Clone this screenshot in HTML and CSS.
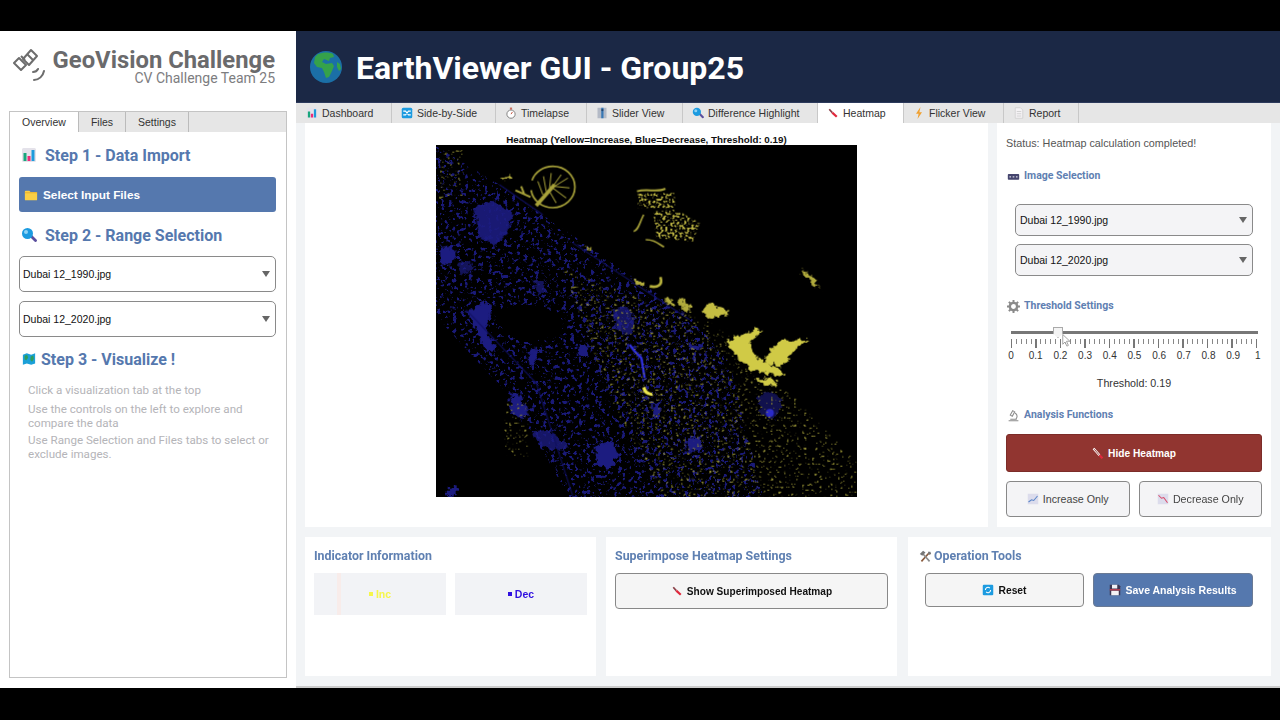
FILE: index.html
```html
<!DOCTYPE html>
<html lang="en">
<head>
    <meta charset="UTF-8">
    <title>EarthViewer GUI - Group25</title>
    <link rel="stylesheet" href="styles.css">
</head>
<body>
    <svg class="icon-defs" xmlns="http://www.w3.org/2000/svg">
        <symbol id="i-bars" viewBox="0 0 16 16">
            <rect x="1" y="1" width="14" height="14" rx="1.5" fill="#e4e2ea"/>
            <rect x="2.5" y="6" width="3" height="8" fill="#19a67c"/>
            <rect x="6.5" y="9" width="3" height="5" fill="#ef2a78"/>
            <rect x="10.5" y="3" width="3" height="11" fill="#1d9bdc"/>
        </symbol>
        <symbol id="i-folder" viewBox="0 0 16 16">
            <path d="M1 4a1 1 0 0 1 1-1h4l1.500 1.500H14a1 1 0 0 1 1 1V13a1 1 0 0 1-1 1H2a1 1 0 0 1-1-1z" fill="#fbcf45"/>
            <path d="M1 5h14v1H1z" fill="#e0a92c"/>
        </symbol>
        <symbol id="i-search" viewBox="0 0 16 16">
            <path d="M9 10l2-2 4.500 4.500a1.400 1.400 0 0 1-2 2z" fill="#5b4f9e"/>
            <circle cx="6.500" cy="6.500" r="5.500" fill="#1c9be0"/>
            <circle cx="5" cy="5" r="2" fill="#8fd3f5"/>
        </symbol>
        <symbol id="i-map" viewBox="0 0 16 16">
            <path d="M1 3l4.500-1.500L10.500 3 15 1.500V13l-4.500 1.500L5.500 13 1 14.500z" fill="#1ba0d8"/>
            <path d="M3 4l3-.5 1 3-2 3-2-1zM10 5l3-1 .5 4-2 3-2-2z" fill="#2f9e5b"/>
        </symbol>
        <symbol id="i-globe" viewBox="0 0 32 32">
            <circle cx="16" cy="16" r="16" fill="#1b6fa6"/>
            <path d="M9 3c4-2 10-2 14 0l1 3-4 1-1 3-5-2-2 3 4 2 6-1 2 3-2 5-3 6-3 1-2-6-2-4-5-1-3-4 1-6 3-3z" fill="#35a24a"/>
            <path d="M27 11l3 2 1 5-2 2-2-4z" fill="#35a24a"/>
        </symbol>
        <symbol id="i-swap" viewBox="0 0 16 16">
            <rect x="1" y="1" width="14" height="14" rx="2" fill="#1c9be0"/>
            <path d="M3 5.500h3l4 5h3M3 10.500h3l4-5h3" fill="none" stroke="#fff" stroke-width="1.400"/>
        </symbol>
        <symbol id="i-timer" viewBox="0 0 16 16">
            <circle cx="8" cy="9.500" r="5.500" fill="#fff" stroke="#777" stroke-width="1.200"/>
            <path d="M8 9.500l2-3M6.500 1.500h3M8 1.500V4" fill="none" stroke="#c0442f" stroke-width="1.200"/>
        </symbol>
        <symbol id="i-slider" viewBox="0 0 16 16">
            <rect x="2" y="1" width="12" height="14" fill="#b4bac6"/>
            <rect x="7" y="1" width="3" height="14" fill="#3878b4"/>
            <circle cx="8.500" cy="4" r="1.500" fill="#24466e"/>
        </symbol>
        <symbol id="i-line" viewBox="0 0 16 16">
            <path d="M3 3l4 4.500" stroke="#8a4048" stroke-width="2.200"/>
            <path d="M7 7.500l6 5.500" stroke="#e0283c" stroke-width="3"/>
        </symbol>
        <symbol id="i-line-light" viewBox="0 0 16 16">
            <path d="M2 2l8 9" stroke="#fff" stroke-width="3"/>
            <path d="M3 3l6.500 7.500" stroke="#913530" stroke-width="1.200"/>
            <path d="M10 11l4 4" stroke="#e0283c" stroke-width="3"/>
        </symbol>
        <symbol id="i-bolt" viewBox="0 0 16 16">
            <path d="M10 0L4 9h3.500L6 16l6-9H8.500z" fill="#f0a030"/>
        </symbol>
        <symbol id="i-doc" viewBox="0 0 16 16">
            <path d="M3 1h7l3 3v11H3z" fill="#f4f2f4" stroke="#ccc"/>
            <path d="M5 6h6M5 9h6M5 12h6" stroke="#c8c8c8"/>
        </symbol>
        <symbol id="i-keys" viewBox="0 0 16 16">
            <rect x="1" y="5" width="14" height="7" rx="1" fill="#45456e"/>
            <path d="M3 8.500h2M7 8.500h2M11 8.500h2" stroke="#d8d8e4" stroke-width="1.500"/>
        </symbol>
        <symbol id="i-gear" viewBox="0 0 16 16">
            <circle cx="8" cy="8" r="4.500" fill="none" stroke="#8a8a8a" stroke-width="3"/>
            <path d="M8 0v3M8 13v3M0 8h3M13 8h3M2.300 2.300l2 2M11.700 11.700l2 2M13.700 2.300l-2 2M4.300 11.700l-2 2" stroke="#8a8a8a" stroke-width="2.400"/>
        </symbol>
        <symbol id="i-scope" viewBox="0 0 16 16">
            <path d="M2 14.500h12M4 12.500h8M7 2l2.500 1.500-3 5.500L4 7.500zM10 5c3 2 3 5 1 7.500" fill="none" stroke="#8c8c8c" stroke-width="1.300"/>
        </symbol>
        <symbol id="i-up" viewBox="0 0 16 16">
            <rect x="1" y="1" width="14" height="14" fill="#dcdcec"/>
            <path d="M2 12l4-3 3 1 5-6" fill="none" stroke="#5a86c8" stroke-width="1.400"/>
        </symbol>
        <symbol id="i-down" viewBox="0 0 16 16">
            <rect x="1" y="1" width="14" height="14" fill="#dcdcec"/>
            <path d="M2 3l4 4 3-1 5 7" fill="none" stroke="#d84868" stroke-width="1.400"/>
        </symbol>
        <symbol id="i-tools" viewBox="0 0 16 16">
            <path d="M3 14L12 4" stroke="#8a5a3c" stroke-width="2"/>
            <path d="M13 14L5 5" stroke="#8c8c8c" stroke-width="2"/>
            <path d="M1 5l4-4 3 2-4 4zM11 2l3 0 1 3-3 1z" fill="#777"/>
        </symbol>
        <symbol id="i-reset" viewBox="0 0 16 16">
            <rect x="1" y="1" width="14" height="14" rx="1.500" fill="#1c9be0"/>
            <path d="M4.500 8a3.500 3.500 0 0 1 6-2.500M11.500 8a3.500 3.500 0 0 1-6 2.500" fill="none" stroke="#fff" stroke-width="1.400"/>
        </symbol>
        <symbol id="i-save" viewBox="0 0 16 16">
            <path d="M1 1h12l2 2v12H1z" fill="#3a3550"/>
            <rect x="4" y="1" width="7" height="5" fill="#f0f0f4"/>
            <rect x="3" y="9" width="10" height="6" fill="#f4f2f4"/>
            <rect x="1" y="7" width="14" height="1.500" fill="#d84050"/>
        </symbol>
    </svg>

    <div class="app">
        <aside class="sidebar">
            <div class="brand">
                <svg class="brand-logo" viewBox="0 0 32 34">
                    <g fill="none" stroke="#6d6d6d" stroke-width="2" stroke-linejoin="round">
                        <path d="M10 11l8-9 6 6-8 9z"/>
                        <path d="M1 15l5-5 7 7-5 5z"/>
                        <path d="M14 6l6 6M8 8l4 4"/>
                        <path d="M20 24c2 0 4-1 5-3M21 32c5 0 9-4 10-9" stroke-linecap="round"/>
                    </g>
                </svg>
                <div class="brand-text">
                    <div class="brand-title">GeoVision Challenge</div>
                    <div class="brand-sub">CV Challenge Team 25</div>
                </div>
            </div>

            <div class="side-panel">
                <div class="side-tabs">
                    <a class="side-tab side-tab-on">Overview</a>
                    <a class="side-tab">Files</a>
                    <a class="side-tab">Settings</a>
                </div>
                <div class="side-body">
                    <h2 class="step step-1"><svg class="step-icon"><use href="#i-bars"/></svg>Step 1 - Data Import</h2>
                    <button class="select-files"><svg class="btn-icon-lg"><use href="#i-folder"/></svg>Select Input Files</button>
                    <h2 class="step step-2"><svg class="step-icon"><use href="#i-search"/></svg>Step 2 - Range Selection</h2>
                    <div class="drop drop-side">Dubai 12_1990.jpg</div>
                    <div class="drop drop-side">Dubai 12_2020.jpg</div>
                    <h2 class="step step-3"><svg class="step-icon-sm"><use href="#i-map"/></svg>Step 3 - Visualize !</h2>
                    <div class="help">
                        <p>Click a visualization tab at the top</p>
                        <p>Use the controls on the left to explore and compare the data</p>
                        <p>Use Range Selection and Files tabs to select or exclude images.</p>
                    </div>
                </div>
            </div>
        </aside>

        <main class="main">
            <header class="top">
                <svg class="globe"><use href="#i-globe"/></svg>
                <h1>EarthViewer GUI - Group25</h1>
            </header>

            <nav class="tabs">
                <a class="tab"><svg><use href="#i-bars"/></svg>Dashboard</a>
                <a class="tab"><svg><use href="#i-swap"/></svg>Side-by-Side</a>
                <a class="tab"><svg><use href="#i-timer"/></svg>Timelapse</a>
                <a class="tab"><svg><use href="#i-slider"/></svg>Slider View</a>
                <a class="tab"><svg><use href="#i-search"/></svg>Difference Highlight</a>
                <a class="tab tab-on"><svg><use href="#i-line"/></svg>Heatmap</a>
                <a class="tab"><svg><use href="#i-bolt"/></svg>Flicker View</a>
                <a class="tab"><svg><use href="#i-doc"/></svg>Report</a>
            </nav>

            <div class="workspace">
                <div class="upper">
                    <section class="plot">
                        <div class="plot-title">Heatmap (Yellow=Increase, Blue=Decrease, Threshold: 0.19)</div>
                        <svg class="heatmap" viewBox="20 46 1261 1056" preserveAspectRatio="none">
                            <defs>
                                <filter id="speck-blue" x="0" y="0" width="100%" height="100%" color-interpolation-filters="sRGB">
                                    <feTurbulence type="fractalNoise" baseFrequency="0.085" numOctaves="3" seed="4" result="n"/>
                                    <feColorMatrix in="n" type="matrix" values="0 0 0 0 0 0 0 0 0 0 0 0 0 0 0 10 0 0 0 -5.700" result="m"/>
                                    <feComposite in="SourceGraphic" in2="m" operator="in"/>
                                </filter>
                                <filter id="speck-yellow" x="0" y="0" width="100%" height="100%" color-interpolation-filters="sRGB">
                                    <feTurbulence type="fractalNoise" baseFrequency="0.13" numOctaves="2" seed="11" result="n"/>
                                    <feColorMatrix in="n" type="matrix" values="0 0 0 0 0 0 0 0 0 0 0 0 0 0 0 14 0 0 0 -9.300" result="m"/>
                                    <feComposite in="SourceGraphic" in2="m" operator="in"/>
                                </filter>
                                <filter id="speck-isle" x="0" y="0" width="100%" height="100%" color-interpolation-filters="sRGB">
                                    <feTurbulence type="fractalNoise" baseFrequency="0.14" numOctaves="1" seed="7" result="n"/>
                                    <feColorMatrix in="n" type="matrix" values="0 0 0 0 0 0 0 0 0 0 0 0 0 0 0 14 0 0 0 -7.300" result="m"/>
                                    <feComposite in="SourceGraphic" in2="m" operator="in"/>
                                </filter>
                                <filter id="rough" x="-10%" y="-10%" width="120%" height="120%" color-interpolation-filters="sRGB">
                                    <feTurbulence type="fractalNoise" baseFrequency="0.07" numOctaves="2" seed="3" result="n"/>
                                    <feDisplacementMap in="SourceGraphic" in2="n" scale="26" xChannelSelector="R" yChannelSelector="G"/>
                                </filter>
                            </defs>
                            <rect x="20" y="46" width="1261" height="1056" fill="#000"/>

                            <!-- blue = decrease -->
                            <g filter="url(#speck-blue)" fill="#1a1a78">
                                <path d="M20 50L210 165 780 560 900 700 1000 1102H420L240 800 20 560z"/>
                            </g>
                            <path d="M190 540l100-20 110 30 0 70-100 20-80-30z" fill="#000" filter="url(#rough)"/>
                            <g filter="url(#rough)" fill="#1c1c80">
                                <path d="M135 235l60-25 55 45-15 50-40 45-45-25z" opacity=".9"/>
                                <path d="M30 355l35-5 18 25-25 30-28-5z"/>
                                <path d="M85 400l35-10 15 30-40 15z" opacity=".7"/>
                                <path d="M115 545l50-30 25 15-20 70 30 60-30 5-30-70z"/>
                                <path d="M305 445l35 10 10 30-30 5z" opacity=".7"/>
                                <path d="M545 540l50-10 25 40-20 50-40-20z" opacity=".75"/>
                                <path d="M240 800l25-10 35 60-25 20-30-20z"/>
                                <path d="M305 905l50-5 65 50-30 15-60-20z" opacity=".8"/>
                                <path d="M495 945l50-10 25 40-30 45-35-20z"/>
                                <path d="M295 670l25-20 5 45-25 10z"/>
                                <path d="M670 820l25-5-5 40-20 5z"/>
                                <path d="M770 930l40-10 10 40-50 5z"/>
                                <path d="M55 1075l30-5 0 25-30 7z"/>
                                <path d="M445 650l30 0 0 30-30 0z"/>
                                <path d="M780 640l35 5-5 20-30-5z"/>
                                <path d="M985 800l40-15 35 25-25 60-45-15z" opacity=".6"/>
                            </g>
                            <path d="M600 645l15 20 20 20 10 60" fill="none" stroke="#3030e0" stroke-width="7"/>
                            <path d="M210 165L340 255M110 540L320 760 430 1100M430 340L780 570" fill="none" stroke="#101060" stroke-width="3"/>
                            <circle cx="1020" cy="850" r="12" fill="#2a2ac8"/>

                            <!-- yellow = increase -->
                            <g filter="url(#speck-yellow)" fill="#8f8a32">
                                <path d="M400 420L900 600 1281 1000V1102H700L560 850z"/>
                                <path d="M30 60h70v150H30z"/>
                                <path d="M225 820h70v160h-70z"/>
                            </g>
                            <g filter="url(#speck-isle)" fill="#b8b040">
                                <path d="M625 190h110v45H625z"/>
                                <path d="M670 245l70-5 70 40-20 55-110-10z"/>
                            </g>
                            <g fill="none" stroke="#a8a23a">
                                <ellipse cx="370" cy="172" rx="66" ry="62" stroke-width="5" stroke-dasharray="190 30 180 12"/>
                                <path d="M320 228L375 165" stroke-width="11"/>
                                <path d="M340 195l-15-40M350 185l-8-45M360 175l5-45M370 170l25-35M375 170l40-25M375 170l45 5M370 175l40 30M360 185l20 35" stroke-width="3"/>
                                <path d="M258 182l45 20M275 170l10 25" stroke-width="6"/>
                                <path d="M622 185c30-10 60 5 85-8" stroke-width="6"/>
                                <path d="M648 330c25 0 35 10 55 22M612 305c15-5 15-20 30-50" stroke-width="5"/>
                                <path d="M660 470c25 5 40-5 32-28" stroke="#b8b23e" stroke-width="8"/>
                            </g>
                            <g filter="url(#rough)" fill="#b0aa3c">
                                <path d="M215 148l30-12 5 12-25 6z"/>
                                <path d="M1115 418l25 18 35 45-30-22-25-20z"/>
                                <path d="M830 525l22-3 15 15 32 5-5 14-60 8-12-15z" fill="#c4bd42"/>
                                <path d="M708 505l18 5 5 18-22-3zM745 508l20 5-5 20-15-10zM765 520l25 5-15 25-15-15z"/>
                                <path d="M620 450l25 8-8 12-20-8zM465 348l22 5-5 8z"/>
                            </g>
                            <g filter="url(#rough)" fill="#d0ca46">
                                <path d="M890 635l60-25 30-12 20 5-40 35 15 42 75 42 15 16-50-6-55-15-40-35z"/>
                                <path d="M1006 690l22-35 25-22 82-3-45 35-30 45-50-8z"/>
                                <path d="M985 748l25 0 35 10-5 12-35-5-20-8z"/>
                            </g>
                            <path d="M640 775c0 12 10 20 28 22l-2-6c-12-2-18-8-20-18z" fill="#f0ea50" stroke="#f0ea50" stroke-width="3"/>
                        </svg>
                    </section>

                    <section class="controls">
                        <div class="status">Status: Heatmap calculation completed!</div>
                        <h3 class="sec-title sec-image"><svg><use href="#i-keys"/></svg>Image Selection</h3>
                        <div class="drop drop-right">Dubai 12_1990.jpg</div>
                        <div class="drop drop-right">Dubai 12_2020.jpg</div>
                        <h3 class="sec-title sec-thresh"><svg><use href="#i-gear"/></svg>Threshold Settings</h3>

                        <div class="slider">
                            <div class="track"></div>
                            <div class="thumb"></div>
                            <svg class="cursor" viewBox="0 0 12 18"><path d="M1 1v13l3-3 2.500 5.500 2-1L6 10h4.500z" fill="#fff" stroke="#888"/></svg>
                            <div class="ticks"></div>
                            <div class="tick-labels">
                                <span>0</span><span>0.1</span><span>0.2</span><span>0.3</span><span>0.4</span><span>0.5</span><span>0.6</span><span>0.7</span><span>0.8</span><span>0.9</span><span>1</span>
                            </div>
                        </div>
                        <div class="thresh-value">Threshold: 0.19</div>

                        <h3 class="sec-title sec-analysis"><svg><use href="#i-scope"/></svg>Analysis Functions</h3>
                        <button class="btn-hide"><svg><use href="#i-line-light"/></svg>Hide Heatmap</button>
                        <div class="btn-row">
                            <button class="btn-only"><svg><use href="#i-up"/></svg>Increase Only</button>
                            <button class="btn-only"><svg><use href="#i-down"/></svg>Decrease Only</button>
                        </div>
                    </section>
                </div>

                <div class="lower">
                    <section class="card card-indicator">
                        <h3 class="sec-title">Indicator Information</h3>
                        <div class="legend">
                            <div class="legend-item legend-inc"><span class="dot"></span>Inc</div>
                            <div class="legend-item legend-dec"><span class="dot"></span>Dec</div>
                        </div>
                    </section>
                    <section class="card card-super">
                        <h3 class="sec-title">Superimpose Heatmap Settings</h3>
                        <button class="btn-plain btn-super"><svg><use href="#i-line"/></svg>Show Superimposed Heatmap</button>
                    </section>
                    <section class="card card-tools">
                        <h3 class="sec-title"><svg><use href="#i-tools"/></svg>Operation Tools</h3>
                        <div class="tool-row">
                            <button class="btn-plain btn-reset"><svg><use href="#i-reset"/></svg>Reset</button>
                            <button class="btn-save"><svg><use href="#i-save"/></svg>Save Analysis Results</button>
                        </div>
                    </section>
                </div>
            </div>
        </main>
    </div>
</body>
</html>
```

FILE: styles.css
```css
* {
    box-sizing: border-box;
}

body {
    margin: 0;
    height: 720px;
    padding: 31px 0 32px;
    background-color: #000;
    font-family: "Liberation Sans", sans-serif;
    overflow: hidden;
}

h1, h2, h3, p {
    margin: 0;
}

button {
    font-family: inherit;
    cursor: pointer;
}

.icon-defs {
    position: absolute;
    width: 0;
    height: 0;
}

.app {
    display: flex;
    height: 657px;
}

/* sidebar */
.sidebar {
    width: 296px;
    flex-shrink: 0;
    background-color: #fff;
    padding: 16px 9px 10px;
    display: flex;
    flex-direction: column;
}

.brand {
    height: 64px;
    display: flex;
    align-items: flex-start;
    justify-content: space-between;
    padding: 0 12px 0 4px;
}

.brand-logo {
    width: 32px;
    height: 34px;
    margin-top: 1px;
}

.brand-text {
    text-align: right;
    font-family: Roboto, sans-serif;
    padding-top: 1px;
}

.brand-title {
    font-size: 23.800px;
    font-weight: 700;
    line-height: 24px;
    color: #6a6a6c;
}

.brand-sub {
    font-size: 14px;
    line-height: 12px;
    color: #7d7d7f;
}

.side-panel {
    flex-grow: 1;
    border: 1px solid #c4c4c4;
}

.side-tabs {
    display: flex;
    height: 20px;
    background-color: #e6e6e6;
}

.side-tab {
    font-size: 10.500px;
    line-height: 20px;
    text-align: center;
    color: #333;
    border-right: 1px solid #bbb;
    width: 47px;
}

.side-tab:nth-child(3) {
    width: 63px;
}

.side-tab-on {
    width: 69px;
    background-color: #fff;
}

.side-body {
    padding: 0 10px 0 9px;
}

.step {
    display: flex;
    align-items: center;
    font-family: Roboto, sans-serif;
    font-size: 16px;
    font-weight: 700;
    color: #5578ae;
    height: 20px;
}

.step-1, .step-2 {
    margin-top: 13px;
}

.step-3 {
    margin-top: 12px;
}

.step-icon {
    width: 16px;
    height: 16px;
    margin: 0 8px 0 2px;
}

.step-icon-sm {
    width: 14px;
    height: 14px;
    margin: 0 5px 0 3px;
}

.select-files {
    display: flex;
    align-items: center;
    width: 257px;
    height: 35px;
    margin-top: 12px;
    padding: 0 0 0 5px;
    background-color: #5578ae;
    border: none;
    border-radius: 3px;
    color: #fff;
    font-size: 11.800px;
    font-weight: 700;
}

.btn-icon-lg {
    width: 14px;
    height: 14px;
    margin-right: 5px;
}

.drop {
    position: relative;
    font-size: 10.500px;
    color: #111;
    border: 1px solid #8a8a8a;
    border-radius: 5px;
}

.drop::after {
    content: "";
    position: absolute;
    right: 5px;
    top: 50%;
    margin-top: -3px;
    border-left: 4px solid transparent;
    border-right: 4px solid transparent;
    border-top: 6px solid #666;
}

.drop-side {
    width: 257px;
    height: 36px;
    line-height: 34px;
    padding-left: 3px;
    margin-bottom: 9px;
    background-color: #fff;
}

.side-body .step-2 + .drop {
    margin-top: 11px;
}

.help {
    margin-top: 14px;
    padding-left: 9px;
    font-family: Roboto, sans-serif;
    font-size: 11.600px;
    line-height: 14px;
    color: #b4b4b8;
}

.help p {
    margin-bottom: 3px;
}

.help p:first-child {
    margin-bottom: 5px;
}

/* header and tabs */
.main {
    flex-grow: 1;
    display: flex;
    flex-direction: column;
    min-width: 0;
    background-color: #f2f4f6;
}

.top {
    height: 72px;
    background-color: #1b2845;
    display: flex;
    align-items: center;
    padding: 2px 0 0 14px;
    border-bottom: 1px solid #2c3a5c;
}

.globe {
    width: 32px;
    height: 32px;
    margin: 0 14px 2px 0;
}

.top h1 {
    font-family: Roboto, sans-serif;
    font-size: 32px;
    font-weight: 700;
    color: #fff;
}

.tabs {
    display: grid;
    grid-template-columns: 95px 104px 91px 96px 135px 86px 100px 75px;
    justify-content: start;
    height: 20px;
    padding-left: 1px;
    background-color: #e6e6e6;
}

.tab {
    display: flex;
    align-items: center;
    font-size: 10.500px;
    color: #333;
    padding-left: 9px;
    border-right: 1px solid #c8c8c8;
}

.tab svg {
    width: 12px;
    height: 12px;
    margin-right: 4px;
}

.tab-on {
    background-color: #fff;
}

.workspace {
    flex-grow: 1;
    padding: 0 9px 0 9px;
    border-bottom: 2px solid #ccc;
}

.upper {
    display: flex;
    gap: 9px;
    height: 404px;
}

.plot {
    width: 683px;
    background-color: #fff;
    display: flex;
    flex-direction: column;
    align-items: center;
}

.plot-title {
    font-size: 9.800px;
    font-weight: 700;
    color: #111;
    line-height: 11px;
    margin-top: 11px;
}

.heatmap {
    width: 421px;
    height: 352px;
    display: block;
}

/* right column */
.controls {
    flex-grow: 1;
    background-color: #fff;
    padding: 14px 9px 0;
}

.status {
    font-size: 10.800px;
    line-height: 13px;
    color: #555;
}

.sec-title {
    display: flex;
    align-items: center;
    font-family: Roboto, sans-serif;
    font-size: 10.500px;
    font-weight: 700;
    line-height: 14px;
    color: #5f80b2;
}

.sec-title svg {
    width: 13px;
    height: 13px;
    margin-right: 4px;
}

.sec-image {
    margin-top: 19px;
    margin-left: 1px;
}

.drop-right {
    width: 238px;
    height: 32px;
    line-height: 30px;
    margin: 0 0 8px 9px;
    padding-left: 4px;
    background-color: #f4f4f6;
}

.sec-image + .drop-right {
    margin-top: 21px;
}

.sec-thresh {
    margin-top: 23px;
    margin-left: 1px;
}

.slider {
    position: relative;
    height: 39px;
    margin: 18px 4px 0 5px;
}

.track {
    height: 3px;
    background-color: #777;
}

.thumb {
    position: absolute;
    left: 42px;
    top: -4px;
    width: 10px;
    height: 11px;
    background-color: #f4f4f4;
    border: 1px solid #aaa;
    clip-path: polygon(0 0, 100% 0, 100% 60%, 50% 100%, 0 60%);
}

.cursor {
    position: absolute;
    left: 51px;
    top: 2px;
    width: 9px;
    height: 15px;
}

.ticks {
    height: 9px;
    margin-top: 5px;
    background-image:
        repeating-linear-gradient(90deg, #777 0, #777 1px, transparent 1px, transparent 24.500px),
        repeating-linear-gradient(90deg, #888 0, #888 1px, transparent 1px, transparent 4.900px);
    background-size: 100% 9px, 100% 5px;
    background-repeat: no-repeat;
}

.tick-labels {
    display: flex;
    justify-content: space-between;
    margin-top: 2px;
    font-size: 10px;
    line-height: 11px;
    color: #333;
}

.tick-labels span {
    width: 0;
    display: flex;
    justify-content: center;
}

.thresh-value {
    margin-top: 7px;
    text-align: center;
    font-size: 10.700px;
    line-height: 13px;
    color: #333;
}

.sec-analysis {
    margin-top: 18px;
    margin-left: 1px;
}

.btn-hide {
    display: flex;
    align-items: center;
    justify-content: center;
    width: 256px;
    height: 38px;
    margin-top: 12px;
    background-color: #913530;
    border: 1px solid #7c2c28;
    border-radius: 3px;
    color: #fff;
    font-size: 10.200px;
    font-weight: 700;
}

.btn-hide svg, .btn-only svg, .btn-plain svg, .btn-save svg {
    width: 12px;
    height: 12px;
    margin-right: 4px;
}

.btn-row {
    display: flex;
    gap: 9px;
    margin-top: 9px;
}

.btn-only {
    display: flex;
    align-items: center;
    justify-content: center;
    width: 123.500px;
    height: 36px;
    background-color: #f4f4f6;
    border: 1px solid #888;
    border-radius: 4px;
    color: #444;
    font-size: 10.700px;
}

/* bottom cards */
.lower {
    display: flex;
    gap: 10px;
    margin-top: 10px;
    height: 139px;
}

.card {
    background-color: #fff;
    padding: 12px 9px 0;
}

.card-indicator, .card-super {
    width: 291px;
}

.card-tools {
    flex-grow: 1;
    margin-left: 1px;
}

.card .sec-title {
    font-size: 12.400px;
    line-height: 14px;
}

.card-tools .sec-title {
    margin-left: 2px;
}

.card-tools .sec-title svg {
    margin-right: 2px;
}

.legend {
    display: flex;
    gap: 9px;
    margin-top: 10px;
}

.legend-item {
    flex: 1;
    height: 42px;
    display: flex;
    align-items: center;
    justify-content: center;
    background-color: #f2f3f6;
    font-size: 10.500px;
    font-weight: 700;
}

.legend-inc {
    color: #f6f64a;
    background-image: linear-gradient(90deg, transparent 23px, #f8ecea 23px, #f8ecea 27px, transparent 27px);
}

.legend-dec {
    color: #3010e0;
}

.dot {
    width: 4px;
    height: 4px;
    margin-right: 3px;
    background-color: currentColor;
}

.btn-plain {
    display: flex;
    align-items: center;
    justify-content: center;
    background-color: #f5f5f5;
    border: 1px solid #888;
    border-radius: 4px;
    color: #111;
    font-size: 10.100px;
    font-weight: 700;
}

.btn-super {
    width: 273px;
    height: 36px;
    margin-top: 10px;
}

.tool-row {
    display: flex;
    gap: 9px;
    margin: 10px 0 0 8px;
}

.btn-reset {
    width: 159px;
    height: 34px;
    font-size: 10.300px;
}

.btn-save {
    display: flex;
    align-items: center;
    justify-content: center;
    width: 160px;
    height: 34px;
    background-color: #5578ae;
    border: 1px solid #6a7a94;
    border-radius: 4px;
    color: #fff;
    font-size: 10.500px;
    font-weight: 700;
}
```
